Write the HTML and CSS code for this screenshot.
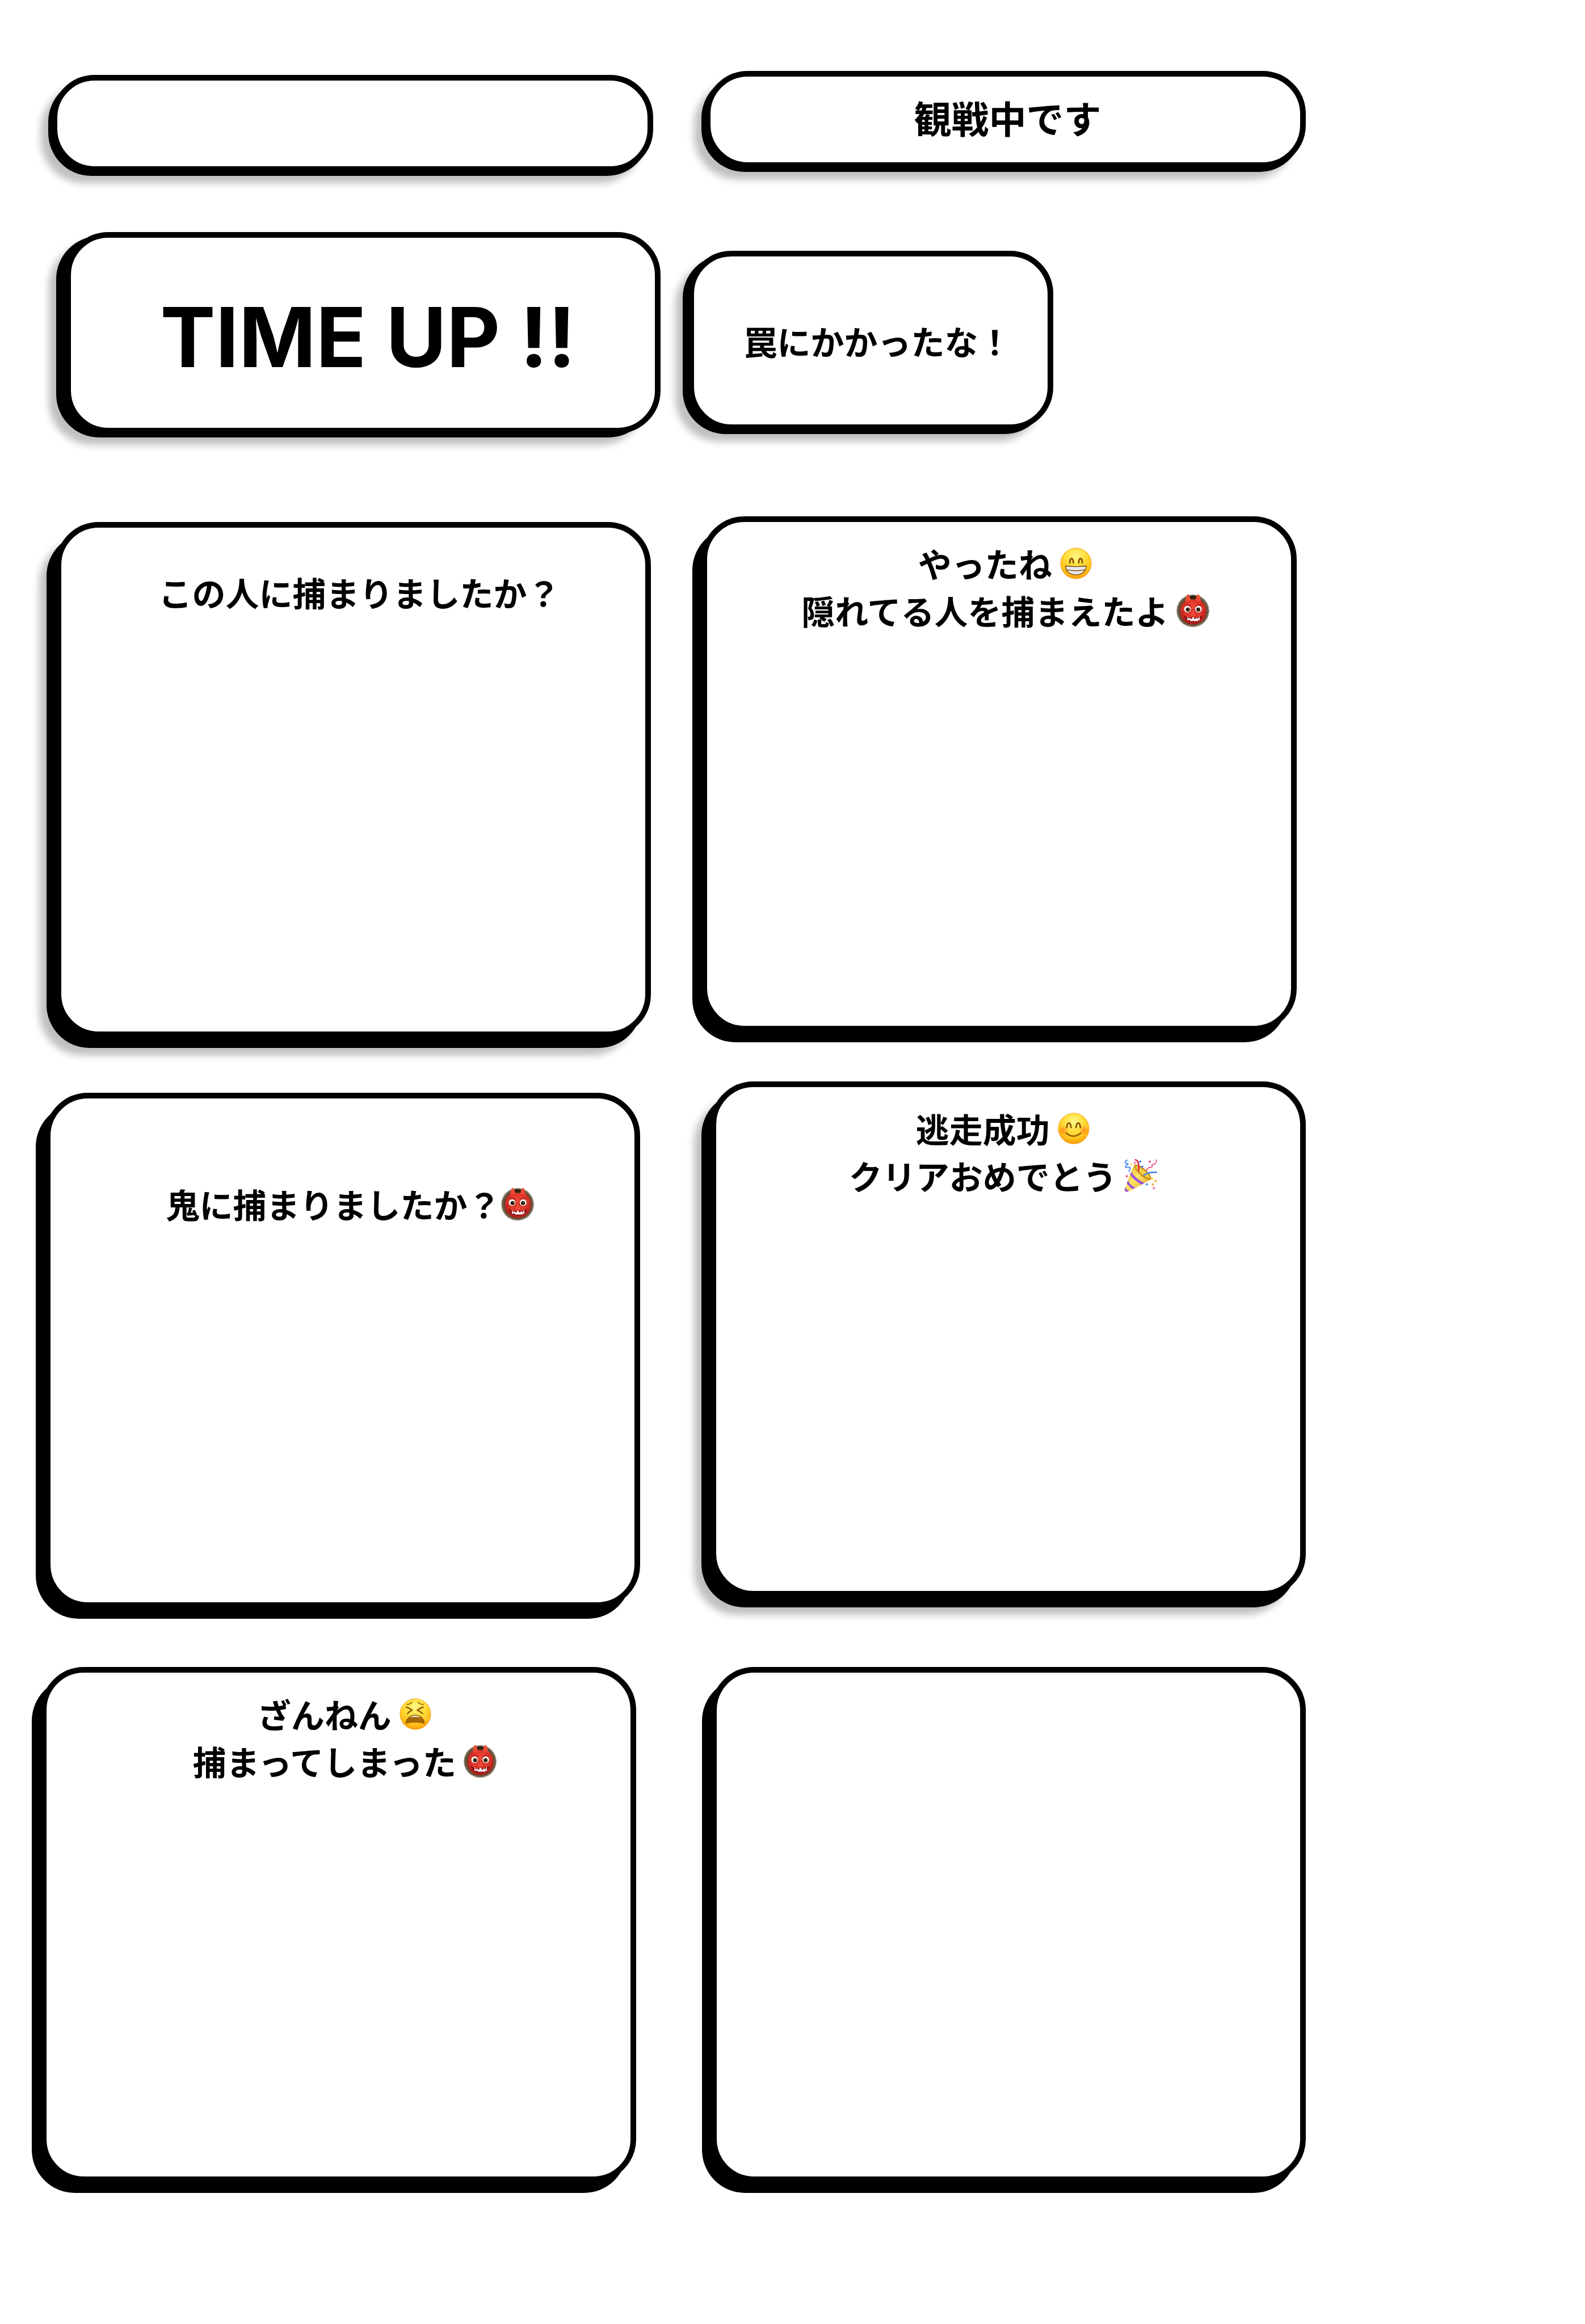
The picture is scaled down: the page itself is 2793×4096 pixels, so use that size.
FILE: index.html
```
<!DOCTYPE html>
<html lang="ja">
<head>
<meta charset="utf-8">
<meta name="viewport" content="width=device-width, initial-scale=1">
<title>鬼ごっこ ダイアログ</title>
<link rel="stylesheet" href="styles.css">
</head>
<body>
<svg class="defs" aria-hidden="true">
  <defs>
    <radialGradient id="skin" cx="50%" cy="28%" r="74%">
      <stop offset="0" stop-color="#fff888"/>
      <stop offset=".4" stop-color="#ffe040"/>
      <stop offset=".75" stop-color="#ffc01c"/>
      <stop offset="1" stop-color="#f79a08"/>
    </radialGradient>
    <radialGradient id="blush">
      <stop offset="0" stop-color="#ff7a1a" stop-opacity=".75"/>
      <stop offset="1" stop-color="#ff8a1a" stop-opacity="0"/>
    </radialGradient>
    <radialGradient id="oni-skin" cx="50%" cy="40%" r="60%">
      <stop offset="0" stop-color="#f5503c"/>
      <stop offset=".65" stop-color="#dd3328"/>
      <stop offset="1" stop-color="#a31b1b"/>
    </radialGradient>
    <linearGradient id="gold" x1="0" y1="0" x2="1" y2="1">
      <stop offset="0" stop-color="#d9a51c"/>
      <stop offset=".45" stop-color="#ffe56a"/>
      <stop offset="1" stop-color="#d99a12"/>
    </linearGradient>

    <symbol id="grin" viewBox="-4 -4 208 208">
      <circle cx="100" cy="100" r="97" fill="url(#skin)" stroke="#f2960c" stroke-width="3"/>
      <g fill="none" stroke="#8a5200" stroke-width="10" stroke-linecap="round">
        <path d="M61 97C62 60 82 60 84 97"/>
        <path d="M117 97C119 60 139 60 140 97"/>
      </g>
      <path d="M34 116Q100 124 165 116C163 191 36 191 34 116Z" fill="#e6e6ee" stroke="#7b4300" stroke-width="5" stroke-linejoin="round"/>
      <path d="M39 140Q100 153 160 140" fill="none" stroke="#7b4300" stroke-width="5"/>
    </symbol>

    <symbol id="smile" viewBox="-4 -4 208 208">
      <circle cx="100" cy="100" r="97" fill="url(#skin)" stroke="#f2960c" stroke-width="3"/>
      <circle cx="34" cy="112" r="34" fill="url(#blush)"/>
      <circle cx="166" cy="112" r="34" fill="url(#blush)"/>
      <g fill="none" stroke="#8a5200" stroke-width="10" stroke-linecap="round">
        <path d="M56 93C59 56 80 56 83 93"/>
        <path d="M115 93C118 56 139 56 142 93"/>
      </g>
      <path d="M52 128Q99 168 145 128" fill="none" stroke="#8a5200" stroke-width="8" stroke-linecap="round"/>
    </symbol>

    <symbol id="weary" viewBox="-4 -4 208 208">
      <circle cx="100" cy="100" r="97" fill="url(#skin)" stroke="#f2960c" stroke-width="3"/>
      <g fill="none" stroke="#935a00" stroke-width="6" stroke-linecap="round">
        <path d="M46 39Q68 40 79 24"/>
        <path d="M151 39Q129 40 115 24"/>
      </g>
      <g fill="none" stroke="#935a00" stroke-width="9" stroke-linecap="round" stroke-linejoin="round">
        <path d="M43 56Q60 62 79 75Q60 84 50 97"/>
        <path d="M149 56Q132 62 112 75Q132 84 145 97"/>
      </g>
      <path d="M40 159C42 88 155 88 157 159Q99 143 40 159Z" fill="#a56606" stroke="#875000" stroke-width="3"/>
      <path d="M61 122Q98 96 136 122Q98 114 61 122Z" fill="#f0f0f4"/>
    </symbol>

    <symbol id="oni" viewBox="0 0 210 210">
      <circle cx="105" cy="107" r="99" fill="#5f4c34"/>
      <circle cx="105" cy="107" r="101" fill="none" stroke="#4a3824" stroke-width="6" stroke-dasharray="5 4"/>
      <circle cx="105" cy="107" r="93" fill="none" stroke="#94805f" stroke-width="6" stroke-dasharray="3 5"/>
      <path d="M82 18Q105 2 128 18L132 36Q105 26 78 36Z" fill="#33200f"/>
      <path d="M104 36C158 24 190 62 190 112C190 160 150 194 106 194C60 194 24 158 25 110C26 62 54 26 104 36Z" fill="url(#oni-skin)"/>
      <path d="M58 48Q60 8 73 1Q86 10 91 40ZM155 48Q153 8 140 1Q127 10 122 40Z" fill="#f04a35"/>
      <path d="M46 74Q68 56 94 78M166 74Q146 56 118 78M28 114Q42 112 48 122M187 114Q172 112 166 122" fill="none" stroke="#a51d1a" stroke-width="4"/>
      <circle cx="70" cy="96" r="22" fill="#fff" stroke="#8e1712" stroke-width="2"/>
      <circle cx="141" cy="96" r="22" fill="#fff" stroke="#8e1712" stroke-width="2"/>
      <circle cx="73" cy="99" r="13" fill="#2a1a08"/>
      <circle cx="140" cy="99" r="13" fill="#2a1a08"/>
      <circle cx="77" cy="96" r="3" fill="#b98a3a"/>
      <circle cx="144" cy="96" r="3" fill="#b98a3a"/>
      <path d="M100 98Q98 120 87 130Q84 146 98 144Q107 152 117 144Q130 146 127 130Q116 120 114 98Z" fill="#ee4636" stroke="#a51d1a" stroke-width="3"/>
      <path d="M46 132Q60 150 106 150Q152 150 166 132Q160 180 107 180Q54 180 46 132Z" fill="#8c1414"/>
      <path d="M70 141L78 158L88 148V158H101V148H113V158H126V148L138 158L147 141L149 168L138 164V172H126V164V172H113V164V172H101V164V172H88V164L70 168Z" fill="#fff"/>
    </symbol>

    <symbol id="party" viewBox="0 0 217 217">
      <path d="M67 37C48 74 18 150 2 203Q6 218 22 215C76 190 130 160 178 133Z" fill="url(#gold)"/>
      <path d="M67 37C104 26 188 104 178 133C150 152 58 72 67 37Z" fill="#c98a14"/>
      <path d="M73 43C102 44 166 98 170 124C144 130 80 76 73 43Z" fill="#f5cf45"/>
      <path d="M46 84Q74 128 134 158L115 168Q64 140 38 102ZM25 140Q40 172 74 188L58 197Q30 182 17 158ZM8 184Q14 200 30 211L20 215Q6 216 3 203Z" fill="#9c55d8"/>
      <path d="M70 3C98 8 100 40 94 80" fill="none" stroke="#e8284f" stroke-width="10"/>
      <path d="M128 108C150 88 180 84 217 87" fill="none" stroke="#3d86f0" stroke-width="10"/>
      <path d="M22 6C-4 16 6 28 20 28C42 30 -2 44 10 54C24 58 40 46 40 58Q38 70 30 84" fill="none" stroke="#2f74ea" stroke-width="6"/>
      <path d="M212 2C214 22 204 38 186 34C176 34 194 52 178 54C160 52 150 60 146 78" fill="none" stroke="#f0447c" stroke-width="6"/>
      <g>
        <path d="M97 16l9-8 9 8-9 9zM110 48l9-8 9 8-9 9zM140 166l9-8 9 8-9 9z" fill="#3a80ee"/>
        <path d="M38 34l9-8 9 8-9 9zM176 130l9-8 9 8-9 9z" fill="#ffe14a"/>
        <path d="M60 24l10-9 10 9-10 10zM186 190l10-9 10 9-10 10z" fill="#f77fa8"/>
        <path d="M160 16l9-8 9 8-9 9zM8 112l9-8 9 8-9 9z" fill="#ef3b66"/>
        <path d="M198 144l9-8 9 8-9 9zM180 166l9-8 9 8-9 9z" fill="#ff9c2e"/>
      </g>
    </symbol>
  </defs>
</svg>

<main class="board">
  <div class="column">
    <section class="card banner banner-empty soft" aria-label="お知らせ"></section>
    <section class="card time-up soft"><h1 class="headline">TIME UP !!</h1></section>
    <section class="card dialog ask-person soft">
      <p class="message">この人に捕まりましたか？</p>
    </section>
    <section class="card dialog ask-oni">
      <p class="message">鬼に捕まりましたか？<svg class="emoji" role="img" aria-label="鬼"><use href="#oni"/></svg></p>
    </section>
    <section class="card dialog lost">
      <p class="message">ざんねん <svg class="emoji" role="img" aria-label="つらい顔"><use href="#weary"/></svg><br>捕まってしまった <svg class="emoji" role="img" aria-label="鬼"><use href="#oni"/></svg></p>
    </section>
  </div>

  <div class="column">
    <section class="card banner banner-watching soft"><p class="status">観戦中です</p></section>
    <section class="card trap soft"><p class="message">罠にかかったな！</p></section>
    <section class="card dialog caught">
      <p class="message">やったね <svg class="emoji" role="img" aria-label="笑顔"><use href="#grin"/></svg><br>隠れてる人を捕まえたよ <svg class="emoji" role="img" aria-label="鬼"><use href="#oni"/></svg></p>
    </section>
    <section class="card dialog escaped soft">
      <p class="message">逃走成功 <svg class="emoji" role="img" aria-label="にっこり"><use href="#smile"/></svg><br>クリアおめでとう <svg class="emoji" role="img" aria-label="クラッカー"><use href="#party"/></svg></p>
    </section>
    <section class="card dialog blank" aria-label="ダイアログ"></section>
  </div>
</main>
</body>
</html>
```
FILE: styles.css
```
* {
  box-sizing: border-box;
}

body {
  margin: 0;
  background: #fff;
  color: #000;
  font-family: "Noto Sans CJK JP", "Noto Sans", sans-serif;
  font-weight: 700;
}

h1,
p {
  margin: 0;
}

.defs {
  display: block;
  width: 0;
  height: 0;
}

/* two card columns and a free margin on the right */
.board {
  display: grid;
  grid-template-columns: 1141fr 1088fr 492fr;
  padding: 125px 0 250px 72px;
}

.column {
  display: flex;
  flex-direction: column;
}

/* card: outlined face on a solid black slab */
.card {
  --slab-x: -16px;
  --slab-y: 19px;
  max-width: 1049px;
  border: 10px solid #000;
  border-radius: 76px;
  background: #fff;
  box-shadow: var(--slab-x) var(--slab-y) 0 #000;
  text-align: center;
}

.soft {
  box-shadow:
    var(--slab-x) var(--slab-y) 0 #000,
    calc(var(--slab-x) - 13px) calc(var(--slab-y) + 13px) 13px rgba(0, 0, 0, 0.25);
}

.banner {
  --slab-x: -6px;
  --slab-y: 7px;
  display: grid;
  place-items: center;
  max-width: 1060px;
  min-height: 171px;
}

.banner-empty {
  margin: 7px 0 0 19px;
}

.banner-watching {
  margin-left: 29px;
  padding: 0 0 10px 8px;
}

.time-up,
.trap {
  --slab-y: 7px;
  display: grid;
  place-items: center;
}

.time-up {
  min-height: 355px;
  margin: 106px 0 0 43px;
  padding: 14px 0 0 18px;
}

.trap {
  --slab-x: -10px;
  max-width: 643px;
  min-height: 316px;
  margin-top: 146px;
  padding-left: 24px;
}

.dialog {
  min-height: 908px;
  padding: 31px 0 31px 22px;
}

.ask-person {
  margin: 156px 0 0 26px;
  padding-top: 72px;
}

.ask-oni {
  margin: 98px 0 0 7px;
  padding: 144px 0 31px 26px;
}

.lost {
  margin-top: 104px;
}

.caught {
  margin: 152px 0 0 23px;
}

.escaped {
  margin: 88px 0 0 39px;
  padding: 31px 18px 31px 0;
}

.blank {
  margin: 124px 0 0 40px;
}

.headline {
  font-family: Inter, sans-serif;
  font-size: 146px;
  line-height: 180px;
}

.status {
  font-size: 66px;
  line-height: 96px;
}

.message {
  font-size: 59px;
  line-height: 83px;
}

.emoji {
  width: 58px;
  height: 58px;
  vertical-align: -4px;
}
```
